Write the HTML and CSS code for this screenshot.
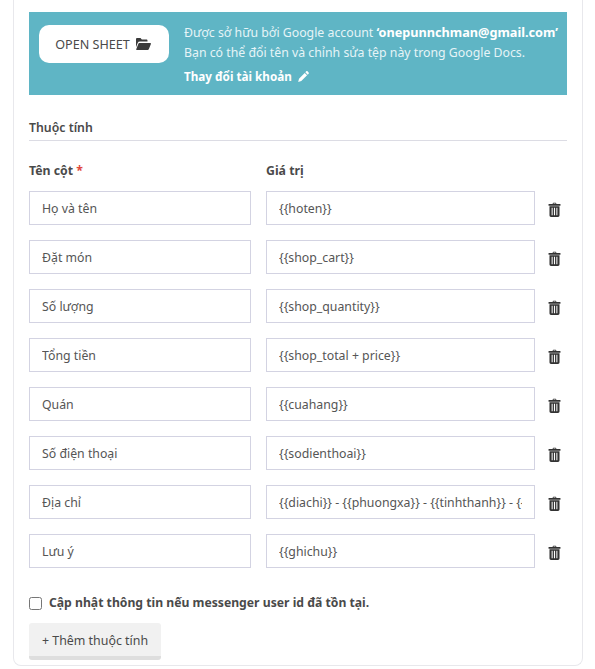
FILE: index.html
```html
<!DOCTYPE html>
<html lang="en">

<head>
    <meta charset="UTF-8">
    <meta name="viewport" content="width=device-width, initial-scale=1.0">
    <title>Thuộc tính</title>
    <link rel="stylesheet" href="styles.css">
</head>

<body>
    <svg class="icon-defs" width="0" height="0">
        <symbol id="trash" viewBox="0 0 14 16">
            <path d="M4.8 2.2 5.600.6h2.800l.8 1.600H13.400v1.700H.6V2.200zM6.100 1.500l-.3.7h2.400l-.3-.7z" />
            <path fill-rule="evenodd" d="M1.600 4.600h10.800v9.600c0 1-.7 1.800-1.600 1.800H3.200c-.9 0-1.600-.8-1.600-1.800zM3.900 6.200v7.900h1.100V6.200zm2.500 0v7.900h1.200V6.200zm2.600 0v7.900h1.100V6.200z" />
        </symbol>
    </svg>

    <div class="card">
        <div class="sheet-bar">
            <a class="open-sheet" href="#">
                OPEN SHEET
                <svg class="folder-icon" viewBox="0 0 15 12">
                    <path d="M0 1.200C0 .5.5 0 1.200 0h3.300l1.300 1.500h4.600c.7 0 1.100.5 1.100 1.100v1H3.700c-.9 0-1.500.4-1.900 1.200L0 9.200z" />
                    <path d="M3.300 5h11c.5 0 .8.5.6 1l-2 5c-.2.6-.7 1-1.300 1H.9c-.5 0-.8-.4-.6-.9l2-5.100c.2-.6.500-1 1-1z" />
                </svg>
            </a>
            <div class="sheet-info">
                <div>Được sở hữu bởi Google account <strong>‘onepunnchman@gmail.com’</strong></div>
                <div>Bạn có thể đổi tên và chỉnh sửa tệp này trong Google Docs.</div>
                <a class="change-account" href="#">
                    Thay đổi tài khoản
                    <svg class="pencil-icon" viewBox="0 0 12 12">
                        <path d="M9 .4c.4-.4 1-.4 1.400 0l1.200 1.200c.4.4.4 1 0 1.400l-1 1L8 1.400zM7.300 2.100l2.600 2.600-6.300 6.300-3.400 1 .9-3.500z" />
                    </svg>
                </a>
            </div>
        </div>

        <div class="section-title">Thuộc tính</div>

        <div class="attr-grid attr-head">
            <label>Tên cột <span class="required">*</span></label>
            <label>Giá trị</label>
        </div>

        <div class="attr-grid">
            <input type="text" value="Họ và tên">
            <input type="text" value="{{hoten}}">
            <svg class="trash-icon"><use href="#trash" /></svg>
        </div>
        <div class="attr-grid">
            <input type="text" value="Đặt món">
            <input type="text" value="{{shop_cart}}">
            <svg class="trash-icon"><use href="#trash" /></svg>
        </div>
        <div class="attr-grid">
            <input type="text" value="Số lượng">
            <input type="text" value="{{shop_quantity}}">
            <svg class="trash-icon"><use href="#trash" /></svg>
        </div>
        <div class="attr-grid">
            <input type="text" value="Tổng tiền">
            <input type="text" value="{{shop_total + price}}">
            <svg class="trash-icon"><use href="#trash" /></svg>
        </div>
        <div class="attr-grid">
            <input type="text" value="Quán">
            <input type="text" value="{{cuahang}}">
            <svg class="trash-icon"><use href="#trash" /></svg>
        </div>
        <div class="attr-grid">
            <input type="text" value="Số điện thoại">
            <input type="text" value="{{sodienthoai}}">
            <svg class="trash-icon"><use href="#trash" /></svg>
        </div>
        <div class="attr-grid">
            <input type="text" value="Địa chỉ">
            <input type="text" value="{{diachi}} - {{phuongxa}} - {{tinhthanh}} - {{quanhuyen}}">
            <svg class="trash-icon"><use href="#trash" /></svg>
        </div>
        <div class="attr-grid">
            <input type="text" value="Lưu ý">
            <input type="text" value="{{ghichu}}">
            <svg class="trash-icon"><use href="#trash" /></svg>
        </div>

        <label class="update-check">
            <input type="checkbox">
            Cập nhật thông tin nếu messenger user id đã tồn tại.
        </label>

        <button type="button" class="add-attr">+ Thêm thuộc tính</button>
    </div>
</body>

</html>
```

FILE: styles.css
```css
body {
    margin: 0;
    font-family: "Noto Sans", "Open Sans", Arial, sans-serif;
    font-size: 12.3px;
    color: #4a4a4a;
    background-color: #ffffff;
}

.icon-defs {
    display: block;
    height: 0;
}

.card {
    width: 570px;
    height: 666px;
    margin-left: 13px;
    padding: 12px 15px 0;
    box-sizing: border-box;
    border: 1px solid #e8e8ec;
    border-top: none;
    border-radius: 0 0 8px 8px;
}

.sheet-bar {
    display: flex;
    align-items: flex-start;
    height: 83px;
    padding: 13px 10px 0;
    box-sizing: border-box;
    background-color: #5fb5c5;
    color: #e6f4f7;
}

.open-sheet {
    display: flex;
    align-items: center;
    justify-content: center;
    gap: 6px;
    flex: none;
    width: 130px;
    height: 38px;
    margin-right: 15px;
    padding-right: 2px;
    box-sizing: border-box;
    background-color: #ffffff;
    border-radius: 10px;
    font-size: 12.6px;
    color: #4a4a4a;
    text-decoration: none;
}

.folder-icon {
    width: 15px;
    height: 12px;
    fill: #3a3a3a;
}

.sheet-info {
    margin-top: -3px;
    line-height: 20px;
    white-space: nowrap;
}

.sheet-info strong {
    font-size: 12.7px;
    color: #ffffff;
}

.change-account {
    display: inline-flex;
    align-items: center;
    gap: 6px;
    margin-top: 3px;
    font-size: 11.7px;
    font-weight: 700;
    color: #ffffff;
    text-decoration: none;
}

.pencil-icon {
    width: 11px;
    height: 11px;
    fill: #ffffff;
}

.section-title {
    margin-top: 24px;
    padding-bottom: 4px;
    font-weight: 600;
    line-height: 17px;
    border-bottom: 1px solid #dcdce4;
}

.attr-grid {
    display: grid;
    grid-template-columns: 222px 269px 32px;
    column-gap: 15px;
    align-items: center;
    margin-bottom: 15px;
}

.attr-grid.attr-head {
    margin-top: 21px;
    margin-bottom: 11px;
    line-height: 18px;
    font-weight: 700;
}

.required {
    color: #e0463c;
}

.attr-grid input {
    width: 100%;
    height: 34px;
    padding: 0 12px;
    box-sizing: border-box;
    border: 1px solid #d3d3e2;
    font-family: inherit;
    font-size: 12.3px;
    color: #555555;
    background-color: #ffffff;
}

.trash-icon {
    width: 13px;
    height: 15px;
    margin: 3px 0 0 -2px;
    fill: #333333;
}

.update-check {
    display: flex;
    align-items: center;
    gap: 7px;
    margin-top: 26px;
    font-size: 12.2px;
    font-weight: 700;
    line-height: 18px;
}

.update-check input {
    width: 13px;
    height: 13px;
    margin: 0;
}

.add-attr {
    display: block;
    width: 132px;
    height: 37px;
    margin-top: 11px;
    padding: 1px 0 0;
    border: none;
    border-bottom: 4px solid #dedede;
    border-radius: 3px;
    background-color: #f1f1f1;
    font-family: inherit;
    font-size: 12.4px;
    color: #4a4a4a;
}
```
